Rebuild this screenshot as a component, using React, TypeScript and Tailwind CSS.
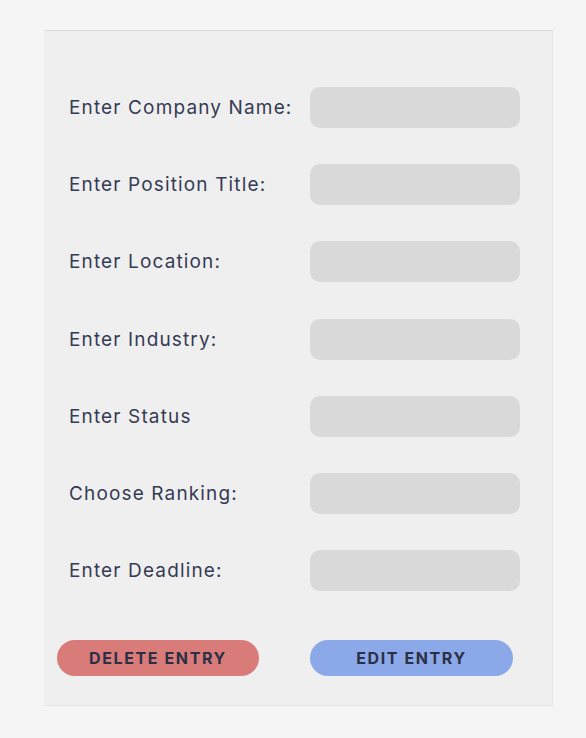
import React from "react";

const fields = [
  "Enter Company Name:",
  "Enter Position Title:",
  "Enter Location:",
  "Enter Industry:",
  "Enter Status",
  "Choose Ranking:",
  "Enter Deadline:",
];

export default function App() {
  return (
    <div className="min-h-[738px] w-full bg-[#f5f5f5] pt-[30px]" style={{ fontFamily: "Inter, 'Noto Sans', sans-serif" }}>
      <div className="ml-[44px] w-[509px] border-t border-t-[#dadada] border-r border-r-[#e6e6e6] border-b border-b-[#e6e6e6] bg-[#efefef] pt-[56px] pb-[29px]">
        <div className="flex flex-col gap-[36.2px]">
          {fields.map((f) => (
            <div key={f} className="flex items-center pl-[25px]">
              <label className="w-[241px] text-[19px] tracking-[0.06em] text-[#363b55] leading-none">{f}</label>
              <input className="h-[41px] w-[210px] rounded-[10px] bg-[#d9d9d9] outline-none" />
            </div>
          ))}
        </div>
        <div className="mt-[49px] flex items-center pl-[13px]">
          <button className="h-[36px] w-[202px] rounded-full bg-[#d97b78] text-[16px] font-bold tracking-[0.1em] text-[#2b3046]">
            DELETE ENTRY
          </button>
          <button className="ml-[51px] h-[36px] w-[203px] rounded-full bg-[#8ba8e8] text-[16px] font-bold tracking-[0.1em] text-[#2b3046]">
            EDIT ENTRY
          </button>
        </div>
      </div>
    </div>
  );
}
